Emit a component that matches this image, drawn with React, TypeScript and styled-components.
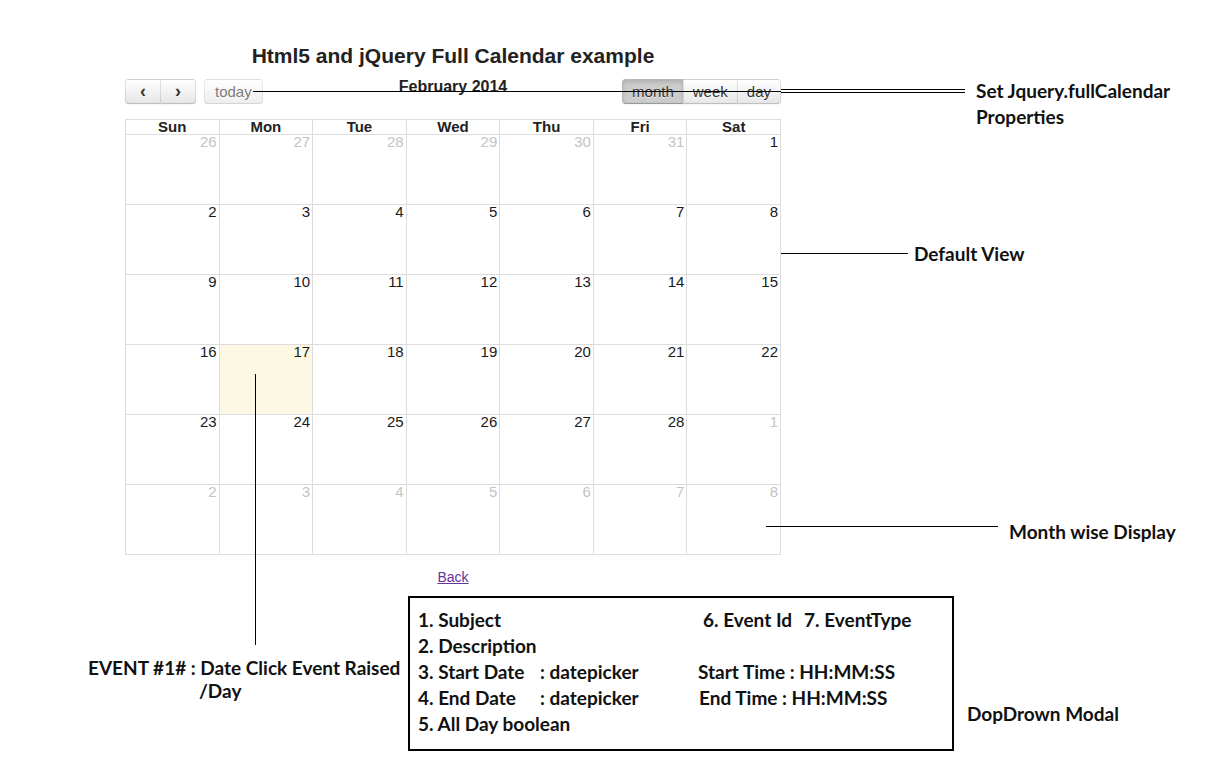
import styled, { createGlobalStyle, css } from "styled-components";

const GlobalStyle = createGlobalStyle`
  html, body {
    margin: 0;
    padding: 0;
    background: #ffffff;
  }
  body {
    font-family: "Liberation Sans", Arial, sans-serif;
    color: #333333;
  }
`;

type Day = { n: number; other?: boolean; today?: boolean };

const buildWeeks = (): Day[][] => {
  const days: Day[] = [];
  [26, 27, 28, 29, 30, 31].forEach((n) => days.push({ n, other: true }));
  for (let n = 1; n <= 28; n++) days.push({ n, today: n === 17 });
  for (let n = 1; n <= 8; n++) days.push({ n, other: true });
  const weeks: Day[][] = [];
  for (let i = 0; i < days.length; i += 7) weeks.push(days.slice(i, i + 7));
  return weeks;
};

const dayNames = ["Sun", "Mon", "Tue", "Wed", "Thu", "Fri", "Sat"];

const App = () => {
  const weeks = buildWeeks();

  return (
    <>
      <GlobalStyle />
      <SPage>
        <SCalendarColumn>
          <STitle>Html5 and jQuery Full Calendar example</STitle>
          <SToolbar>
            <SToolbarLeft>
              <SButtonGroup>
                <SButton $first $icon>‹</SButton>
                <SButton $last $icon>›</SButton>
              </SButtonGroup>
              <SButton $first $last $disabled>
                today
              </SButton>
            </SToolbarLeft>
            <SMonthTitle>February 2014</SMonthTitle>
            <SToolbarRight>
              <SButtonGroup>
                <SButton $first $active>
                  month
                </SButton>
                <SButton>week</SButton>
                <SButton $last>day</SButton>
              </SButtonGroup>
            </SToolbarRight>
          </SToolbar>

          <SGrid>
            {dayNames.map((d) => (
              <SHeadCell key={d}>{d}</SHeadCell>
            ))}
            {weeks.map((week) =>
              week.map((day, i) => (
                <SDayCell key={`${day.n}-${day.other ? "o" : "c"}-${i}`} $today={day.today}>
                  <SDayNumber $other={day.other}>{day.n}</SDayNumber>
                </SDayCell>
              ))
            )}
          </SGrid>

          <SBackRow>
            <SBackLink href="#">Back</SBackLink>
          </SBackRow>

          <SModalBox>
            <SModalLeft>
              <SFieldLine>1. Subject</SFieldLine>
              <SFieldLine>2. Description</SFieldLine>
              <SFieldPair>
                <span>3. Start Date</span>
                <span>: datepicker</span>
              </SFieldPair>
              <SFieldPair>
                <span>4. End Date</span>
                <span>: datepicker</span>
              </SFieldPair>
              <SFieldLine>5. All Day boolean</SFieldLine>
            </SModalLeft>
            <SModalRight>
              <SFieldLine $indent={5}>
                6. Event Id<SGap />7. EventType
              </SFieldLine>
              <SFieldLine />
              <SFieldLine>Start Time : HH:MM:SS</SFieldLine>
              <SFieldLine $indent={1}>End Time : HH:MM:SS</SFieldLine>
            </SModalRight>
          </SModalBox>
        </SCalendarColumn>

        {/* annotation layer */}
        <SHLine style={{ left: 253, top: 91, width: 528 }} />
        <SDoubleLine style={{ left: 781, top: 89, width: 184 }} />
        <SNote style={{ left: 976, top: 78 }}>
          Set Jquery.fullCalendar
          <br />
          Properties
        </SNote>

        <SHLine style={{ left: 781, top: 253, width: 127 }} />
        <SNote style={{ left: 914, top: 241 }}>Default View</SNote>

        <SHLine style={{ left: 766, top: 526, width: 232 }} />
        <SNote style={{ left: 1009, top: 519 }}>Month wise Display</SNote>

        <SVLine style={{ left: 255, top: 374, height: 271 }} />
        <SNote style={{ left: 88, top: 656, lineHeight: "23px" }}>
          EVENT #1# : Date Click Event Raised
          <SNoteIndent>/Day</SNoteIndent>
        </SNote>

        <SNote style={{ left: 967, top: 701 }}>DopDrown Modal</SNote>
      </SPage>
    </>
  );
};

export default App;

const SPage = styled.div`
  position: relative;
  width: 1217px;
  height: 770px;
  overflow: hidden;
  padding: 44px 0 0 125px;
  box-sizing: border-box;
`;

const SCalendarColumn = styled.div`
  width: 656px;
`;

const STitle = styled.h2`
  margin: 0;
  font-size: 21px;
  line-height: 24px;
  font-weight: bold;
  text-align: center;
  color: #222222;
`;

const SToolbar = styled.div`
  display: grid;
  grid-template-columns: 1fr auto 1fr;
  align-items: start;
  margin-top: 11px;
  height: 25px;
`;

const SToolbarLeft = styled.div`
  display: flex;
  gap: 8px;
`;

const SToolbarRight = styled.div`
  display: flex;
  justify-content: flex-end;
`;

const SMonthTitle = styled.div`
  font-size: 16px;
  font-weight: bold;
  line-height: 16px;
  color: #222222;
`;

const SButtonGroup = styled.div`
  display: flex;
`;

const SButton = styled.button<{
  $first?: boolean;
  $last?: boolean;
  $active?: boolean;
  $disabled?: boolean;
  $icon?: boolean;
}>`
  height: 25px;
  min-width: 36px;
  padding: 0 ${(p) => (p.$icon || p.$disabled ? "10px" : "9px")};
  margin: 0;
  margin-left: ${(p) => (p.$first ? "0" : "-1px")};
  font-family: "Liberation Sans", Arial, sans-serif;
  font-size: ${(p) => (p.$icon ? "18px" : "15px")};
  font-weight: ${(p) => (p.$icon ? "bold" : "normal")};
  line-height: 21px;
  color: #333333;
  cursor: pointer;
  background-color: #f5f5f5;
  background-image: linear-gradient(to bottom, #ffffff, #e6e6e6);
  border: 1px solid;
  border-color: rgba(0, 0, 0, 0.1) rgba(0, 0, 0, 0.1) rgba(0, 0, 0, 0.25);
  text-shadow: 0 1px 1px rgba(255, 255, 255, 0.75);
  box-shadow: inset 0 1px 0 rgba(255, 255, 255, 0.2), 0 1px 2px rgba(0, 0, 0, 0.05);
  border-radius: ${(p) =>
    `${p.$first ? 4 : 0}px ${p.$last ? 4 : 0}px ${p.$last ? 4 : 0}px ${p.$first ? 4 : 0}px`};
  ${(p) =>
    p.$active &&
    css`
      background-color: #cccccc;
      background-image: none;
      box-shadow: inset 0 2px 4px rgba(0, 0, 0, 0.15), 0 1px 2px rgba(0, 0, 0, 0.05);
    `}
  ${(p) =>
    p.$disabled &&
    css`
      opacity: 0.65;
      box-shadow: none;
      cursor: default;
    `}
`;

const SGrid = styled.div`
  display: grid;
  grid-template-columns: repeat(7, 1fr);
  grid-template-rows: 15px repeat(6, 70px);
  margin-top: 15px;
  border-right: 1px solid #dddddd;
  border-bottom: 1px solid #dddddd;
`;

const SHeadCell = styled.div`
  border-left: 1px solid #dddddd;
  border-top: 1px solid #dddddd;
  font-size: 15px;
  font-weight: bold;
  line-height: 14px;
  text-align: center;
  color: #222222;
`;

const SDayCell = styled.div<{ $today?: boolean }>`
  border-left: 1px solid #dddddd;
  border-top: 1px solid #dddddd;
  background: ${(p) => (p.$today ? "#fcf8e3" : "#ffffff")};
  display: flex;
  justify-content: flex-end;
  align-items: flex-start;
`;

const SDayNumber = styled.span<{ $other?: boolean }>`
  padding: 0 2px 0 0;
  font-size: 15px;
  line-height: 14px;
  color: ${(p) => (p.$other ? "#c4c4c4" : "#1a1a1a")};
`;

const SBackRow = styled.div`
  display: flex;
  justify-content: center;
  margin-top: 14px;
`;

const SBackLink = styled.a`
  font-size: 14px;
  line-height: 16px;
  color: #663399;
  text-decoration: underline;
`;

const SModalBox = styled.div`
  display: grid;
  grid-template-columns: 280px 1fr;
  margin: 11px 0 0 283px;
  width: 546px;
  height: 155px;
  box-sizing: border-box;
  border: 2px solid #000000;
  padding: 9px 0 0 8px;
  font-family: Lato, "Open Sans", sans-serif;
  font-weight: bold;
  font-size: 19px;
  color: #111111;
`;

const SModalLeft = styled.div`
  display: flex;
  flex-direction: column;
`;

const SModalRight = styled.div`
  display: flex;
  flex-direction: column;
`;

const SFieldLine = styled.div<{ $indent?: number }>`
  height: 26px;
  line-height: 26px;
  white-space: nowrap;
  padding-left: ${(p) => p.$indent ?? 0}px;
`;

const SFieldPair = styled.div`
  display: grid;
  grid-template-columns: 122px auto;
  height: 26px;
  line-height: 26px;
  white-space: nowrap;
`;

const SGap = styled.span`
  display: inline-block;
  width: 12px;
`;

const SNote = styled.div`
  position: absolute;
  font-family: Lato, "Open Sans", sans-serif;
  font-weight: bold;
  font-size: 19px;
  line-height: 26px;
  color: #111111;
  white-space: nowrap;
`;

const SNoteIndent = styled.div`
  padding-left: 111px;
`;

const SHLine = styled.div`
  position: absolute;
  height: 1px;
  background: #000000;
`;

const SDoubleLine = styled.div`
  position: absolute;
  height: 2px;
  border-top: 1px solid #000000;
  border-bottom: 1px solid #000000;
`;

const SVLine = styled.div`
  position: absolute;
  width: 1px;
  background: #000000;
`;
